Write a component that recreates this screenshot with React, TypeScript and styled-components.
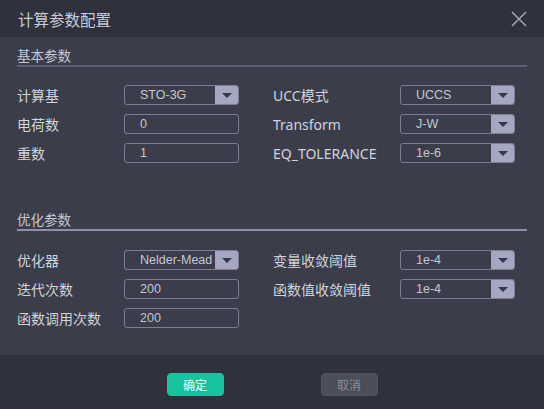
import React from 'react';
import styled, { createGlobalStyle } from 'styled-components';

const GlobalStyle = createGlobalStyle`
  html, body, #root {
    margin: 0;
    padding: 0;
    height: 100%;
  }
  body {
    background: #2f323d;
    font-family: 'Noto Sans', 'Noto Sans CJK SC', sans-serif;
  }
`;

const Dialog = styled.div`
  display: flex;
  flex-direction: column;
  width: 544px;
  height: 409px;
  background: #3b3e4a;
  color: #d0d3dc;
`;

const Header = styled.div`
  height: 37px;
  flex-shrink: 0;
  display: flex;
  align-items: center;
  justify-content: space-between;
  padding: 0 17px 0 18px;
  background: #2f323d;
`;

const Title = styled.h1`
  margin: 0;
  font-size: 15.5px;
  font-weight: 400;
  color: #c9ccd6;
  line-height: 20px;
  font-family: 'Noto Sans CJK SC', sans-serif;
`;

const CloseButton = styled.button`
  width: 16px;
  height: 16px;
  padding: 0;
  border: none;
  background: transparent;
  cursor: pointer;
  display: flex;

  svg {
    display: block;
  }
`;

const Body = styled.div`
  flex: 1;
  padding: 10px 17px 0;
  display: flex;
  flex-direction: column;
`;

const Section = styled.section<{ $spaceTop?: number }>`
  margin-top: ${p => p.$spaceTop ?? 0}px;
`;

const SectionTitle = styled.h2<{ $line: string }>`
  margin: 0;
  height: 18px;
  line-height: 16px;
  font-size: 13.5px;
  font-weight: 400;
  color: #c3c7d6;
  border-bottom: 2px solid ${p => p.$line};
  font-family: 'Noto Sans CJK SC', sans-serif;
`;

const FieldGrid = styled.div<{ $top: number }>`
  display: grid;
  grid-template-columns: 222px 242px;
  column-gap: 34px;
  row-gap: 9px;
  margin-top: ${p => p.$top}px;
`;

const Field = styled.div<{ $labelWidth: number }>`
  display: grid;
  grid-template-columns: ${p => p.$labelWidth}px 115px;
  align-items: center;
  height: 20px;
`;

const Label = styled.span`
  font-size: 14px;
  color: #d0d3dc;
  white-space: nowrap;
  font-family: 'Noto Sans', 'Noto Sans CJK SC', sans-serif;
`;

const Box = styled.div`
  box-sizing: border-box;
  height: 20px;
  width: 115px;
  border: 1px solid #7b8090;
  border-radius: 3px;
  display: flex;
  align-items: stretch;
  overflow: hidden;
`;

const Value = styled.span`
  flex: 1;
  min-width: 0;
  overflow: hidden;
  white-space: nowrap;
  padding-left: 15px;
  font-size: 12.5px;
  line-height: 18px;
  color: #c3c7d2;
  font-family: 'Liberation Sans', 'Noto Sans CJK SC', sans-serif;
`;

const Arrow = styled.span`
  width: 23px;
  flex-shrink: 0;
  background: #a3a8c0;
  display: flex;
  align-items: center;
  justify-content: center;

  &::after {
    content: '';
    border-left: 5px solid transparent;
    border-right: 5px solid transparent;
    border-top: 5px solid #353846;
  }
`;

const Footer = styled.div`
  height: 54px;
  flex-shrink: 0;
  background: #2f323d;
  display: flex;
  justify-content: center;
  align-items: flex-start;
  padding-top: 18px;
  box-sizing: border-box;
  gap: 97px;
`;

const Button = styled.button<{ $primary?: boolean }>`
  width: 57px;
  height: 23px;
  border-radius: 4px;
  border: 1px solid ${p => (p.$primary ? '#1ec39f' : '#50545f')};
  background: ${p => (p.$primary ? '#17c29c' : '#4a4e5a')};
  color: ${p => (p.$primary ? '#ffffff' : '#8b8f9b')};
  font-size: 12px;
  font-family: 'Noto Sans CJK SC', sans-serif;
  padding: 0;
  cursor: pointer;
`;

type Item = { label: string; value: string; select?: boolean };

const basic: { left: Item[]; right: Item[] } = {
  left: [
    { label: '计算基', value: 'STO-3G', select: true },
    { label: '电荷数', value: '0' },
    { label: '重数', value: '1' },
  ],
  right: [
    { label: 'UCC模式', value: 'UCCS', select: true },
    { label: 'Transform', value: 'J-W', select: true },
    { label: 'EQ_TOLERANCE', value: '1e-6', select: true },
  ],
};

const optim: { left: Item[]; right: Item[] } = {
  left: [
    { label: '优化器', value: 'Nelder-Mead', select: true },
    { label: '迭代次数', value: '200' },
    { label: '函数调用次数', value: '200' },
  ],
  right: [
    { label: '变量收敛阈值', value: '1e-4', select: true },
    { label: '函数值收敛阈值', value: '1e-4', select: true },
  ],
};

const FieldRow: React.FC<{ item: Item; labelWidth: number }> = ({ item, labelWidth }) => (
  <Field $labelWidth={labelWidth}>
    <Label>{item.label}</Label>
    <Box>
      <Value>{item.value}</Value>
      {item.select && <Arrow />}
    </Box>
  </Field>
);

const Fields: React.FC<{ data: { left: Item[]; right: Item[] }; top: number }> = ({ data, top }) => {
  const rows = Math.max(data.left.length, data.right.length);
  const cells: React.ReactNode[] = [];
  for (let i = 0; i < rows; i++) {
    const l = data.left[i];
    const r = data.right[i];
    cells.push(l ? <FieldRow key={'l' + i} item={l} labelWidth={107} /> : <div key={'l' + i} />);
    cells.push(r ? <FieldRow key={'r' + i} item={r} labelWidth={127} /> : <div key={'r' + i} />);
  }
  return <FieldGrid $top={top}>{cells}</FieldGrid>;
};

const App: React.FC = () => (
  <>
    <GlobalStyle />
    <Dialog>
      <Header>
        <Title>计算参数配置</Title>
        <CloseButton aria-label="close">
          <svg width="16" height="16" viewBox="0 0 16 16">
            <path d="M1 1L15 15M15 1L1 15" stroke="#9ea3b3" strokeWidth="1.6" fill="none" />
          </svg>
        </CloseButton>
      </Header>
      <Body>
        <Section>
          <SectionTitle $line="#596074">基本参数</SectionTitle>
          <Fields data={basic} top={18} />
        </Section>
        <Section $spaceTop={48}>
          <SectionTitle $line="#8a90ad">优化参数</SectionTitle>
          <Fields data={optim} top={19} />
        </Section>
      </Body>
      <Footer>
        <Button $primary>确定</Button>
        <Button>取消</Button>
      </Footer>
    </Dialog>
  </>
);

export default App;
